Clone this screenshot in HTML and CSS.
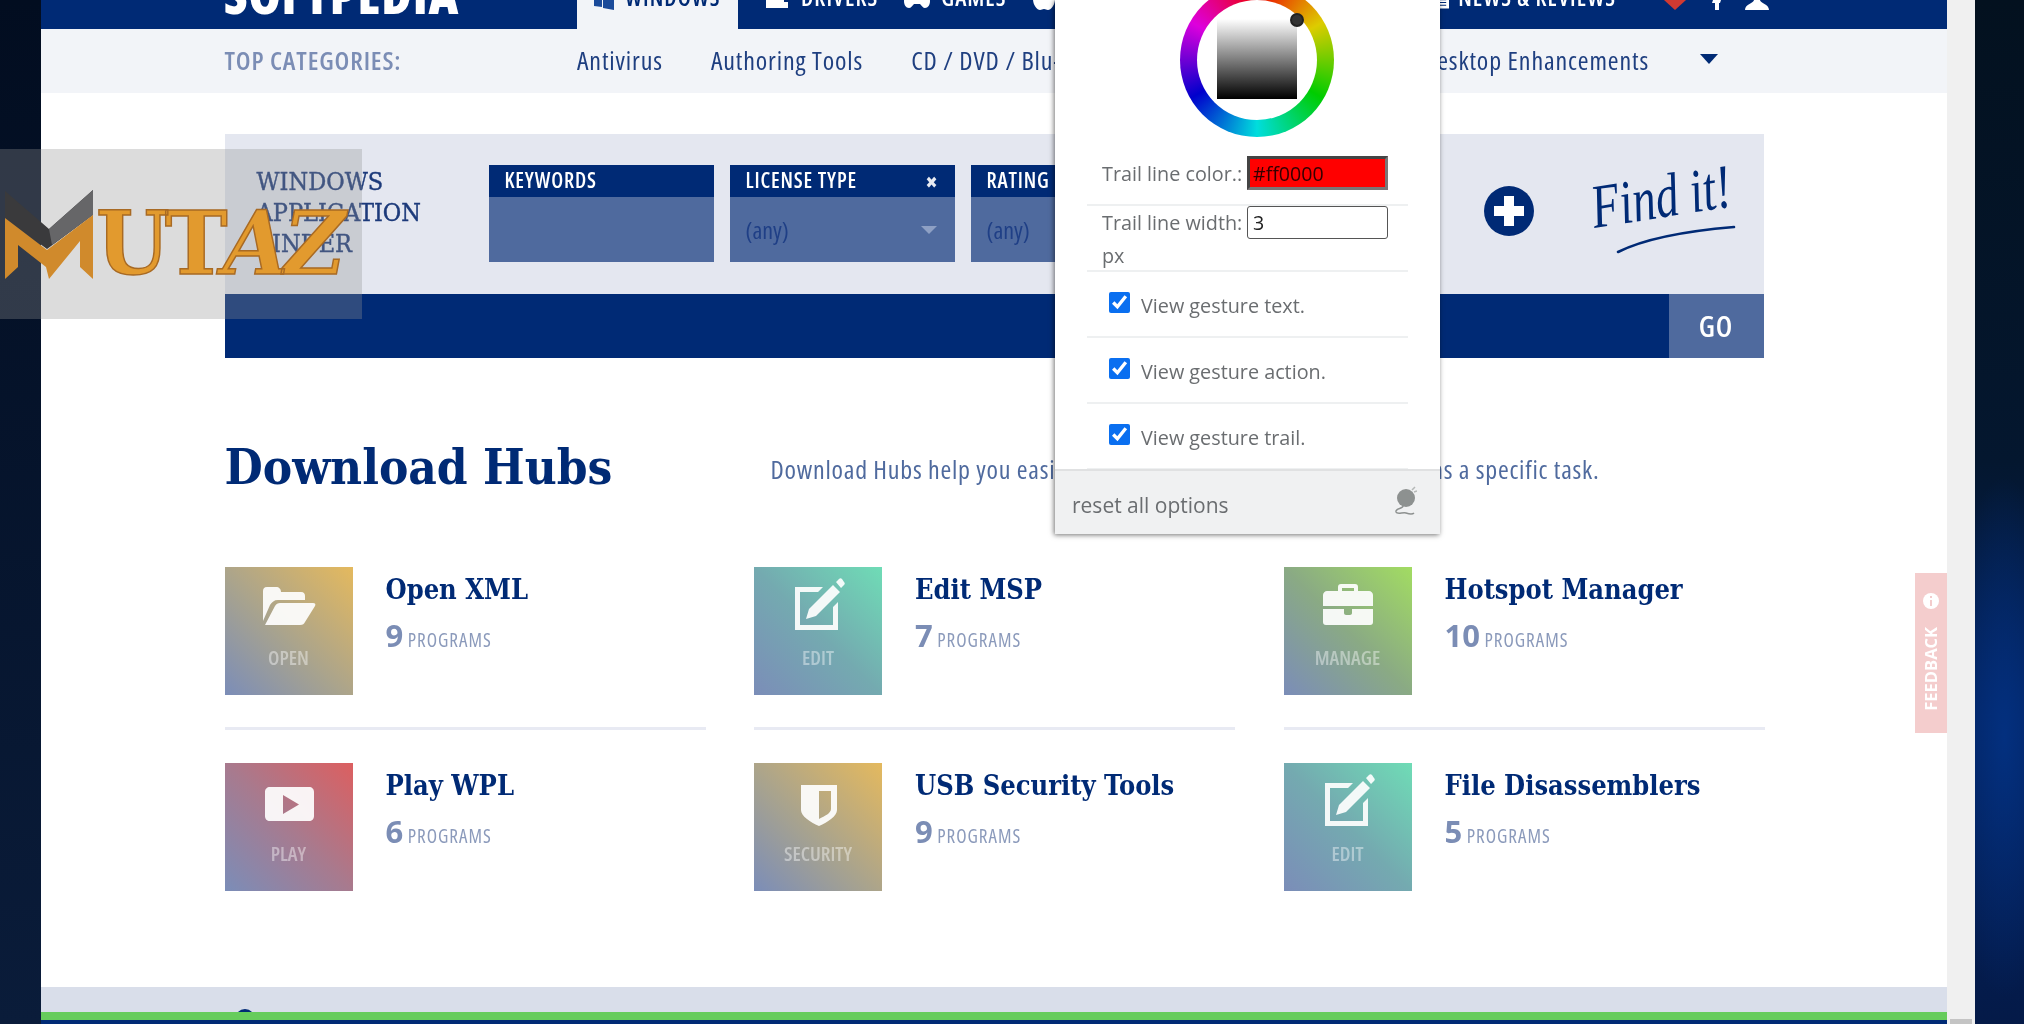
FILE: index.html
```html
<!DOCTYPE html>
<html lang="en">
<head>
<meta charset="utf-8">
<title>Softpedia Windows</title>
<link rel="stylesheet" href="styles.css">
</head>
<body>
<div class="screen">
  <div class="desk-left"></div>
  <main class="page">
    <header class="topbar">
      <div class="brand">SOFTPEDIA</div>
      <nav class="nav">
        <a class="nav-item active">
          <svg class="nav-ico" viewBox="0 0 20 20"><path d="M0 3l8-1v7H0zM9 2l11-2v9H9zM0 10h8v7l-8-1zM9 10h11v10L9 18z"/></svg>WINDOWS</a>
        <a class="nav-item">
          <svg class="nav-ico wide" viewBox="0 0 26 20"><path d="M2 0h18v12h4v6H2zM5 3v6h12V3z"/></svg>DRIVERS</a>
        <a class="nav-item">
          <svg class="nav-ico wide" viewBox="0 0 26 20"><path d="M7 2h12c4 0 7 4 7 9 0 4-2 7-5 7-2 0-3-2-5-4h-6c-2 2-3 4-5 4-3 0-5-3-5-7 0-5 3-9 7-9z"/></svg>GAMES</a>
        <a class="nav-item">
          <svg class="nav-ico apple" viewBox="0 0 22 20"><path d="M11 0c8-3 11 3 11 9s-4 11-7 11c-2 0-2-1-4-1s-2 1-4 1c-3 0-7-5-7-11S3-3 11 0z"/></svg></a>
        <span class="nav-spacer"></span>
        <a class="nav-item news">
          <svg class="nav-ico small" viewBox="0 0 16 14"><path d="M0 0h16v14H0zM3 3v2h10V3zm0 4v1h10V7zm0 3v1h10v-1z" fill-rule="evenodd"/></svg>NEWS &amp; REVIEWS</a>
        <svg class="top-ico heart" viewBox="0 0 22 10"><path d="M0 0h22L11 10z"/></svg>
        <svg class="top-ico fb" viewBox="0 0 14 10"><path d="M3 0h8l-1 3H9v7H5V3H2z"/></svg>
        <svg class="top-ico user" viewBox="0 0 24 10"><path d="M9 0h6c0 3 9 4 9 10H0C0 4 9 3 9 0z"/></svg>
      </nav>
    </header>

    <div class="subnav">
      <span class="subnav-title">TOP CATEGORIES:</span>
      <a class="subnav-link first">Antivirus</a>
      <a class="subnav-link">Authoring Tools</a>
      <a class="subnav-link">CD / DVD / Blu-ray</a>
      <a class="subnav-link desktop">Desktop Enhancements</a>
      <span class="subnav-caret"></span>
    </div>

    <section class="finder">
      <div class="finder-top">
        <h2 class="finder-title">WINDOWS APPLICATION FINDER</h2>
        <div class="filter">
          <div class="filter-head">KEYWORDS</div>
          <div class="filter-body"></div>
        </div>
        <div class="filter">
          <div class="filter-head">LICENSE TYPE<span class="filter-x">✖</span></div>
          <div class="filter-body">(any)<span class="filter-arrow"></span></div>
        </div>
        <div class="filter">
          <div class="filter-head">RATING</div>
          <div class="filter-body">(any)<span class="filter-arrow"></span></div>
        </div>
        <span class="finder-grow"></span>
        <svg class="plus" viewBox="0 0 50 50"><circle cx="25" cy="25" r="25" fill="#002a75"/><path d="M20 10h10v10h10v10H30v10H20V30H10V20h10z" fill="#fff"/></svg>
        <div class="findit">
          <span class="findit-text">Find it!</span>
          <svg class="findit-line" viewBox="0 0 120 30"><path d="M2 28C30 14 70 7 118 3" fill="none" stroke="#002a75" stroke-width="2.6" stroke-linecap="round"/></svg>
        </div>
      </div>
      <div class="finder-bar"><span class="go">GO</span></div>
    </section>

    <section class="hubs">
      <div class="hubs-head">
        <h1 class="hubs-title">Download Hubs</h1>
        <p class="hubs-desc"><span>Download Hubs help you easily find apps for the actio</span><span>ns a specific task.</span></p>
      </div>
      <div class="hub-grid">
        <article class="hub">
          <div class="hub-tile open">
            <svg class="hub-ico" viewBox="0 0 64 64"><path d="M6 46V16c0-2 1-4 4-4h9c3 0 5 2 5 5h20c3 0 4 2 4 4v4H21c-4 0-6 2-8 5z"/><path d="M8 50l10-19c1-2 3-3 5-3h33c2 0 3 1 2 3L48 47c-1 2-2 3-5 3z"/></svg>
            <span class="hub-tag">OPEN</span>
          </div>
          <div class="hub-info"><h3 class="hub-name">Open XML</h3><p class="hub-count"><b>9</b> PROGRAMS</p></div>
        </article>
        <article class="hub">
          <div class="hub-tile edit">
            <svg class="hub-ico" viewBox="0 0 64 64"><path d="M9 12h28l-5 5H14v33h33V32l5-5v28H9z"/><path d="M47 10l7 7-24 24-10 3 3-10zM50 7l3-3c1-1 2-1 3 0l2 3c1 1 1 2 0 3l-3 3z"/></svg>
            <span class="hub-tag">EDIT</span>
          </div>
          <div class="hub-info"><h3 class="hub-name">Edit MSP</h3><p class="hub-count"><b>7</b> PROGRAMS</p></div>
        </article>
        <article class="hub">
          <div class="hub-tile manage">
            <svg class="hub-ico" viewBox="0 0 64 64"><path fill-rule="evenodd" d="M22 16v-4c0-2 1-3 3-3h14c2 0 3 1 3 3v4h11c2 0 4 2 4 4v11H7V20c0-2 2-4 4-4zm4 0h12v-3H26z"/><path d="M7 34h21v4c0 1 1 2 2 2h4c1 0 2-1 2-2v-4h21v13c0 2-1 3-3 3H10c-2 0-3-1-3-3z"/></svg>
            <span class="hub-tag">MANAGE</span>
          </div>
          <div class="hub-info"><h3 class="hub-name">Hotspot Manager</h3><p class="hub-count"><b>10</b> PROGRAMS</p></div>
        </article>
        <article class="hub">
          <div class="hub-tile play">
            <svg class="hub-ico" viewBox="0 0 64 64"><path fill-rule="evenodd" d="M13 16h39c3 0 5 2 5 5v24c0 3-2 5-5 5H13c-3 0-5-2-5-5V21c0-3 2-5 5-5zm13 8v19l16-9.500z"/></svg>
            <span class="hub-tag">PLAY</span>
          </div>
          <div class="hub-info"><h3 class="hub-name">Play WPL</h3><p class="hub-count"><b>6</b> PROGRAMS</p></div>
        </article>
        <article class="hub">
          <div class="hub-tile security">
            <svg class="hub-ico" viewBox="0 0 64 64"><path fill-rule="evenodd" d="M15 14h36v25c0 6-9 12-18 16-9-4-18-10-18-16zm18 6v28c6-3 12-6 12-10V20z"/></svg>
            <span class="hub-tag">SECURITY</span>
          </div>
          <div class="hub-info"><h3 class="hub-name">USB Security Tools</h3><p class="hub-count"><b>9</b> PROGRAMS</p></div>
        </article>
        <article class="hub">
          <div class="hub-tile edit">
            <svg class="hub-ico" viewBox="0 0 64 64"><path d="M9 12h28l-5 5H14v33h33V32l5-5v28H9z"/><path d="M47 10l7 7-24 24-10 3 3-10zM50 7l3-3c1-1 2-1 3 0l2 3c1 1 1 2 0 3l-3 3z"/></svg>
            <span class="hub-tag">EDIT</span>
          </div>
          <div class="hub-info"><h3 class="hub-name">File Disassemblers</h3><p class="hub-count"><b>5</b> PROGRAMS</p></div>
        </article>
      </div>
    </section>

    <footer class="foot">
      <div class="foot-band"><span class="foot-dome"></span></div>
      <div class="foot-green"></div>
      <div class="foot-navy"></div>
    </footer>

    <aside class="feedback">
      <svg class="feedback-ico" viewBox="0 0 16 16"><circle cx="8" cy="8" r="8" fill="#fff"/><path d="M7 3h2v2H7zM7 7h2v6H7z" fill="#f3cccc"/></svg>
      <span class="feedback-text">FEEDBACK</span>
    </aside>

    <aside class="popup">
      <div class="wheel-wrap">
        <div class="wheel">
          <div class="wheel-hole"></div>
          <div class="wheel-square"></div>
          <span class="marker marker-hue"></span>
          <span class="marker marker-sat"></span>
        </div>
      </div>
      <div class="opt opt-color">
        <label class="opt-label">Trail line color.:</label>
        <input class="color-input" type="text" value="#ff0000">
      </div>
      <div class="opt opt-width">
        <label class="opt-label">Trail line width:</label>
        <input class="width-input" type="text" value="3">
        <span class="opt-unit">px</span>
      </div>
      <label class="opt opt-check"><input type="checkbox" checked><span>View gesture text.</span></label>
      <label class="opt opt-check"><input type="checkbox" checked><span>View gesture action.</span></label>
      <label class="opt opt-check"><input type="checkbox" checked><span>View gesture trail.</span></label>
      <div class="popup-foot">
        <span>reset all options</span>
        <svg class="mouse" viewBox="0 0 24 32"><circle cx="13" cy="13" r="9" fill="#8d9190"/><path d="M19 5l3-3M21 7l3-1" stroke="#b5b8b7" stroke-width="1.500"/><path d="M10 21c0 3-8 2-7 6 1 3 7 0 10 1s6 2 8 0" fill="none" stroke="#8d9190" stroke-width="1.500"/></svg>
      </div>
    </aside>
  </main>
  <div class="gutter"><span class="gutter-thumb"></span></div>
  <div class="desk-right"></div>

  <div class="watermark">
    <svg class="wm-mark" viewBox="0 0 98 100"><path d="M5 2l44 38L93 1v25L47 60 5 29z" fill="#3a3a3c"/><path d="M93 1v25L52 56l-3-16z" fill="#666668"/><path d="M5 29l42 32 46-35v64L80 78V52L49 90 46 78 18 56v22L5 90z" fill="#d08a2c"/></svg>
    <span class="wm-text">UT<i>AZ</i></span>
  </div>
</div>
</body>
</html>
```
FILE: styles.css
```css
* { box-sizing: border-box; }
html, body { margin: 0; padding: 0; height: 100%; overflow: hidden; }
body { background: #03122a; font-family: "Open Sans", sans-serif; font-stretch: 75%; }
h1, h2, h3, p { margin: 0; font-weight: normal; }

.screen {
  position: relative;
  display: flex;
  width: 2024px;
  height: 1024px;
  overflow: hidden;
  filter: blur(0.55px);
}
.desk-left { width: 41px; flex: none; background: linear-gradient(#020d20, #0a1c3a); }
.desk-right {
  width: 49px; flex: none;
  background:
    radial-gradient(ellipse 60px 260px at 60% 72%, #03307f, transparent),
    linear-gradient(#03111f 0, #04172f 45%, #03225f 70%, #041a48 100%);
}
.gutter { width: 28px; flex: none; background: #f0f0f0; position: relative; }
.gutter-thumb { position: absolute; left: 3px; right: 3px; bottom: 0; height: 5px; background: #c4c4c4; }

.page { width: 1906px; flex: none; position: relative; background: #fff; height: 1024px; overflow: hidden; display: flex; flex-direction: column; }

/* top bar */
.topbar { height: 29px; flex: none; background: #002a75; display: flex; align-items: flex-end; padding-left: 183px; }
.brand { width: 353px; flex: none; color: #fff; font: 800 52px/1 "Open Sans", sans-serif; font-stretch: 75%; letter-spacing: .8px; margin-bottom: 9px; white-space: nowrap; }
.nav { flex: 1; display: flex; align-items: flex-end; height: 29px; }
.nav-item { display: flex; gap: 11px; height: 29px; color: #fff; font-size: 23px; font-weight: 600; letter-spacing: 1px; padding: 0 0 20px 26px; white-space: nowrap; line-height: 1; align-items: flex-end; }
.nav-item.active { background: #f2f4f8; color: #002a75; width: 161px; padding-left: 17px; }
.nav-ico { width: 20px; height: 20px; fill: #fff; flex: none; margin-bottom: -1px; }
.active .nav-ico { fill: #1a4a9a; }
.nav-ico.wide { width: 26px; }
.nav-ico.apple { width: 22px; }
.nav-ico.small { width: 15px; height: 14px; margin-bottom: 0; }
.nav-spacer { flex: 1; }
.nav-item.news { padding-left: 0; gap: 9px; margin-right: 48px; }
.top-ico { height: 10px; flex: none; margin-bottom: 19px; fill: #fff; }
.heart { width: 22px; fill: #d03a32; margin-right: 24px; }
.fb { width: 14px; margin-right: 21px; }
.user { width: 24px; margin-right: 178px; }

/* sub navigation */
.subnav { height: 64px; flex: none; background: #f2f4f8; display: flex; align-items: center; padding: 0 0 2px 183.500px; font-size: 26px; letter-spacing: .85px; color: #1f3f80; white-space: nowrap; overflow: hidden; }
.subnav-title { width: 352.500px; flex: none; font-weight: 600; color: #7b8db5; font-size: 26px; }
.subnav-link { margin-right: 48px; flex: none; }
.subnav-link.desktop { margin-left: auto; margin-right: 0; }
.subnav-caret { flex: none; margin-left: 51px; margin-right: 229px; border-left: 9px solid transparent; border-right: 9px solid transparent; border-top: 10px solid #002a75; margin-bottom: 2px; }

/* finder */
.finder { margin: 41px 183.500px 0; flex: none; }
.finder-top { height: 160px; background: #e4e7f0; display: flex; align-items: flex-start; padding: 31px 0 0 32px; }
.finder-title { width: 232px; flex: none; font: 25px/31px "DejaVu Serif Condensed", "DejaVu Serif", serif; color: #1c3a7a; margin-top: 1px; -webkit-text-stroke: .4px #1c3a7a; }
.filter { width: 225px; flex: none; margin-right: 16px; height: 97px; background: #4f6a9e; color: #1f3f86; font-size: 24px; }
.filter-head { height: 32px; background: #002a75; color: #fff; font-weight: 600; font-size: 21px; letter-spacing: .85px; line-height: 31px; padding: 0 16px; display: flex; justify-content: space-between; }
.filter-x { font-size: 16px; color: #e8ebf2; font-family: "DejaVu Sans", sans-serif; padding-top: 2px; }
.filter-body { height: 65px; padding: 0 16px; display: flex; align-items: center; justify-content: space-between; }
.filter-arrow { border-left: 8px solid transparent; border-right: 8px solid transparent; border-top: 8px solid #8ea0c4; margin-right: 2px; }
.finder-grow { flex: 1; }
.plus { width: 50px; height: 50px; flex: none; margin-top: 21px; margin-right: 62px; }
.findit { width: 138px; height: 84px; flex: none; margin-top: 3px; margin-right: 30px; position: relative; }
.findit-text { display: block; font: italic 62px/62px "Liberation Serif", serif; color: #002a75; white-space: nowrap; transform: translateY(10px) rotate(-9deg) scaleX(.75); transform-origin: left bottom; margin-top: -2px; }
.findit-line { position: absolute; left: 20px; bottom: -2px; width: 120px; height: 30px; }
.finder-bar { height: 64px; background: #002a75; display: flex; justify-content: flex-end; }
.go { width: 95px; background: #4f6a9e; color: #fff; font-weight: 600; font-size: 29px; letter-spacing: 1px; display: flex; align-items: center; justify-content: center; padding-bottom: 2px; }

/* hubs */
.hubs { margin: 0 183.500px; flex: none; }
.hubs-head { height: 209px; display: flex; align-items: flex-start; padding-top: 79px; }
.hubs-title { width: 546px; flex: none; font: bold 49px/60px "DejaVu Serif Condensed", "DejaVu Serif", serif; color: #002a75; white-space: nowrap; }
.hubs-desc { width: 829px; flex: none; display: flex; justify-content: space-between; font-size: 26px; letter-spacing: .75px; line-height: 34px; color: #4f6a9e; padding-top: 15px; white-space: nowrap; }
.hub-grid { display: grid; grid-template-columns: repeat(3, 481px); column-gap: 48.500px; }
.hub { display: flex; gap: 33px; height: 163px; }
.hub:nth-child(-n+3) { border-bottom: 3px solid #e8eaf3; margin-bottom: 33px; padding-bottom: 35px; }
.hub-tile { width: 128px; height: 128px; flex: none; position: relative; }
.hub-tile.open, .hub-tile.security { background: linear-gradient(45deg, #7b8db8 0%, #a8a38e 45%, #e4b95e 100%); }
.hub-tile.edit { background: linear-gradient(45deg, #7b8db8 0%, #74aab0 50%, #6fdcb6 100%); }
.hub-tile.manage { background: linear-gradient(45deg, #7b8db8 0%, #8aaa84 50%, #a2dc62 100%); }
.hub-tile.play { background: linear-gradient(45deg, #7b8db8 0%, #a87a8e 50%, #dc5f60 100%); }
.hub-ico { position: absolute; left: 32px; top: 8px; width: 64px; height: 64px; fill: #fff; opacity: .92; }
.hub-tag { position: absolute; left: 0; right: 0; top: 78px; text-align: center; color: rgba(255,255,255,.42); font-weight: 600; font-size: 20px; line-height: 26px; }
.hub-info { padding-top: 3px; }
.hub-name { font: bold 27px/40px "DejaVu Serif Condensed", "DejaVu Serif", serif; color: #002a75; white-space: nowrap; }
.hub-count { margin-top: 6px; color: #8b9abb; font-size: 19px; letter-spacing: 1px; line-height: 38px; }
.hub-count b { font-size: 31px; font-stretch: 100%; letter-spacing: 0; color: #7b8db5; font-weight: 700; }

/* footer */
.foot { position: absolute; left: 0; right: 0; top: 987px; }
.foot-band { height: 25px; background: #d9deea; position: relative; overflow: hidden; }
.foot-dome { position: absolute; left: 194px; top: 22px; width: 20px; height: 20px; border-radius: 50%; background: #002a75; }
.foot-green { height: 8px; background: #66cc5c; }
.foot-navy { height: 4px; background: #002a75; }

/* feedback tab */
.feedback { position: absolute; left: 1874px; top: 573px; width: 32px; height: 160px; background: #f4cdcd; display: flex; flex-direction: column; align-items: center; padding-top: 20px; }
.feedback-ico { width: 16px; height: 16px; flex: none; }
.feedback-text { writing-mode: vertical-rl; transform: rotate(180deg); color: #fff; font: bold 16.500px/1 "Open Sans", sans-serif; font-stretch: 100%; margin-top: 18px; }

/* extension popup */
.popup { position: absolute; left: 1014px; top: 0; width: 385px; height: 534px; background: #fff; box-shadow: -1px 1px 5px rgba(0,0,0,.55); font-family: "Open Sans", sans-serif; font-stretch: 100%; font-size: 19.800px; color: #6a6d70; display: flex; flex-direction: column; padding: 0 32px; }
.wheel-wrap { height: 156px; flex: none; display: flex; justify-content: center; }
.wheel { position: relative; width: 154px; height: 154px; margin-top: -17px; margin-left: 18px; border-radius: 50%; background: conic-gradient(#e00, #dc0 60deg, #0c0 120deg, #0dd 180deg, #00c 240deg, #d0d 300deg, #e00); flex: none; }
.wheel-hole { position: absolute; inset: 17px; border-radius: 50%; background: #fff; }
.wheel-square { position: absolute; left: 37px; top: 36px; width: 80px; height: 80px; background: linear-gradient(#fff 0, #000 100%); }
.marker { position: absolute; width: 14px; height: 14px; border-radius: 50%; background: #333; border: 2px solid #222; }
.marker-sat { left: 110px; top: 30px; }
.marker-hue { left: 70px; top: 3px; background: #777; border-color: #777; }
.opt { display: flex; flex-wrap: wrap; align-items: center; border-bottom: 2px solid #eef0f1; flex: none; }
.opt-color { height: 50px; padding: 0 0 15px 15px; gap: 7px; }
.opt-label { white-space: nowrap; width: 138px; }
.color-input { width: 141px; height: 34px; padding: 0 3px; border: 3px solid #444; border-bottom-color: #7a7576; border-right-color: #7a7576; background: #f00; color: #300; font: 19.600px "Open Sans", sans-serif; outline: none; }
.opt-width { height: 66px; padding: 0 0 0 15px; gap: 0 7px; align-content: flex-start; }
.width-input { width: 141px; height: 33px; padding: 0 5px; border: 1px solid #555; border-radius: 3px; background: #fff; color: #222; font: 19.600px "Open Sans", sans-serif; outline: none; }
.opt-unit { width: 100%; line-height: 33px; }
.opt-check { height: 66px; padding-left: 22px; gap: 11px; }
.opt-check input { width: 21px; height: 21px; margin: 0; accent-color: #0a6ff0; flex: none; transform: translateY(-2px); }
.opt-check span { position: relative; top: 1px; }
.popup-foot { position: absolute; left: 0; right: 0; bottom: 0; height: 65px; background: #f0f1f2; border-top: 2px solid #e0e1e2; display: flex; align-items: center; justify-content: space-between; padding: 5px 23px 0 17px; font-size: 21px; }
.mouse { width: 24px; height: 32px; margin-top: -8px; }

/* watermark */
.watermark { position: absolute; left: 0; top: 149px; width: 362px; height: 170px; background: rgba(147,147,147,.32); }
.wm-mark { position: absolute; left: 0; top: 40px; width: 98px; height: 100px; }
.wm-text { position: absolute; left: 96px; top: 50px; color: #e29a2e; font: bold 88px/1 "DejaVu Serif", serif; -webkit-text-stroke: 1.500px #a86a24; letter-spacing: -5px; white-space: nowrap; transform: scaleX(.96); transform-origin: left top; }
.wm-text i { font-style: italic; }
```
